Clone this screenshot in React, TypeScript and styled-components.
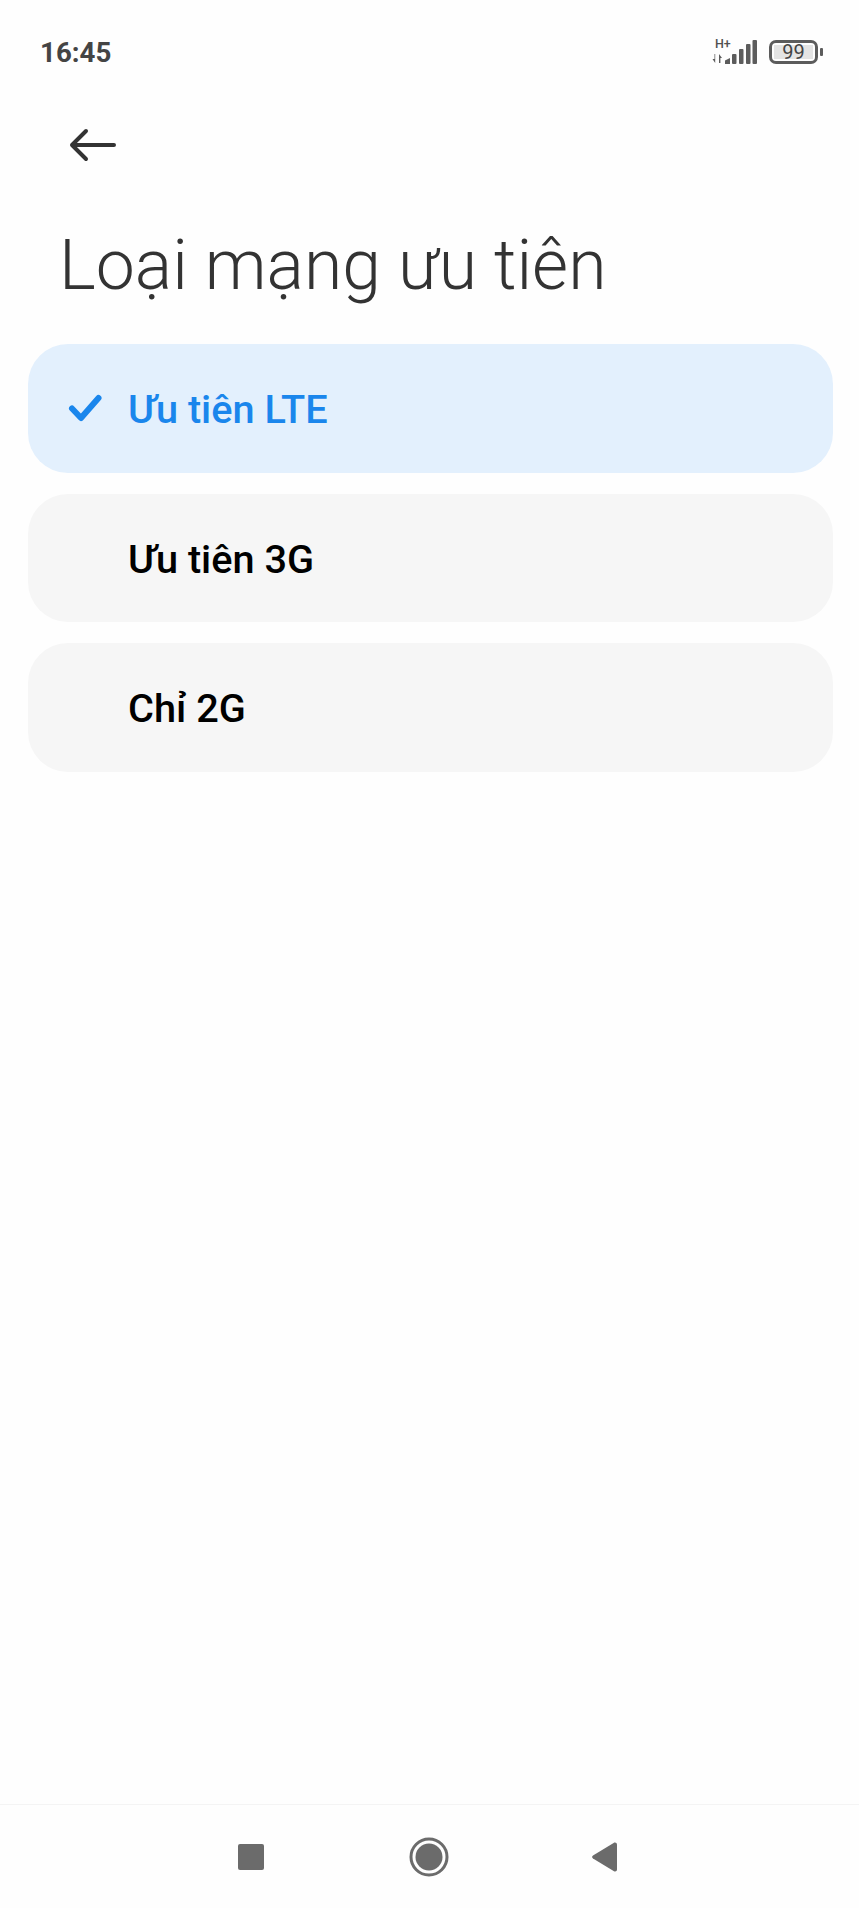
import styled, { createGlobalStyle } from 'styled-components'

const GlobalStyle = createGlobalStyle`
    html, body {
        margin: 0;
        padding: 0;
        background: #ffffff;
        font-family: Roboto, "Noto Sans", sans-serif;
    }
`
const PageStyled = styled.div`
    display: flex;
    flex-direction: column;
    width: 859px;
    height: 1908px;
    overflow: hidden;
    background-color: #fefefe;
`
const StatusBarStyled = styled.header`
    display: flex;
    align-items: center;
    justify-content: space-between;
    height: 104px;
    padding: 0 36px 0 40px;
    box-sizing: border-box;
`
const TimeStyled = styled.span`
    font-size: 27.7px;
    font-weight: 700;
    color: #444444;
`
const StatusIconsStyled = styled.div`
    display: flex;
    align-items: center;
    gap: 12px;
`
const NetworkStyled = styled.div`
    position: relative;
    width: 45px;
    height: 24px;
`
const NetworkTypeStyled = styled.span`
    position: absolute;
    left: 3px;
    top: -2px;
    font-size: 12.5px;
    line-height: 12px;
    font-weight: 500;
    color: #505050;
`
const BatteryStyled = styled.div`
    display: flex;
    align-items: center;
    gap: 2px;
`
const BatteryBodyStyled = styled.div`
    display: flex;
    align-items: center;
    justify-content: center;
    width: 49px;
    height: 24px;
    padding: 2px;
    box-sizing: border-box;
    border: 3px solid #5c5c5c;
    border-radius: 7px;
`
const BatteryLevelStyled = styled.span`
    display: block;
    width: 100%;
    background-color: #e4e4e4;
    font-size: 20px;
    line-height: 14px;
    text-align: center;
    color: #444444;
`
const BatteryNubStyled = styled.span`
    width: 3px;
    height: 8px;
    border-radius: 1px;
    background-color: #5c5c5c;
`
const BackRowStyled = styled.div`
    display: flex;
    padding: 24px 0 0 69px;
`
const TitleStyled = styled.h1`
    margin: 61px 0 37px 59px;
    font-size: 69.7px;
    line-height: 84px;
    font-weight: 300;
    color: #333333;
`
const ListStyled = styled.ul`
    display: flex;
    flex-direction: column;
    gap: 21px;
    margin: 0 26px 0 28px;
    padding: 0;
    list-style: none;
`
const OptionStyled = styled.li<{ $selected?: boolean }>`
    display: flex;
    align-items: center;
    height: 128.5px;
    padding: 3px 0 0 100px;
    box-sizing: border-box;
    position: relative;
    border-radius: 40px;
    font-size: 39.7px;
    font-weight: 500;
    color: ${({ $selected }) => ($selected ? '#1a86ec' : '#000000')};
    background-color: ${({ $selected }) => ($selected ? '#e3f0fd' : '#f6f6f6')};
`
const CheckStyled = styled.svg`
    position: absolute;
    left: 40px;
    top: 50px;
`
const NavBarStyled = styled.nav`
    display: flex;
    align-items: center;
    justify-content: space-between;
    height: 104px;
    margin-top: auto;
    padding: 0 242px 0 238px;
    box-sizing: border-box;
    border-top: 1px solid #f4f4f4;
`
const HomeIconStyled = styled.svg`
    margin-left: 2px;
`

const options = [
    { label: 'Ưu tiên LTE', selected: true },
    { label: 'Ưu tiên 3G', selected: false },
    { label: 'Chỉ 2G', selected: false },
]

function SignalIcon() {
    return (
        <svg width="45" height="24" viewBox="0 0 45 24" fill="#5c5c5c">
            <path d="M2.5 14v5H0.5l2.7 4V14zM7 23v-9l3 4H8.4v5z" />
            <path d="M13 20.5l5-2.5v6h-5z" />
            <rect x="20" y="14" width="4.5" height="10" rx="1" />
            <rect x="27" y="9" width="4.5" height="15" rx="1" />
            <rect x="34" y="4" width="4.5" height="20" rx="1" />
            <rect x="40.5" y="0" width="4.5" height="24" rx="1" />
        </svg>
    )
}

function App() {
    return (
        <PageStyled>
            <GlobalStyle />
            <StatusBarStyled>
                <TimeStyled>16:45</TimeStyled>
                <StatusIconsStyled>
                    <NetworkStyled>
                        <NetworkTypeStyled>H+</NetworkTypeStyled>
                        <SignalIcon />
                    </NetworkStyled>
                    <BatteryStyled>
                        <BatteryBodyStyled>
                            <BatteryLevelStyled>99</BatteryLevelStyled>
                        </BatteryBodyStyled>
                        <BatteryNubStyled />
                    </BatteryStyled>
                </StatusIconsStyled>
            </StatusBarStyled>
            <BackRowStyled>
                <svg width="49" height="34" viewBox="0 0 49 34" fill="none" stroke="#333333" strokeWidth="4" strokeLinecap="round" strokeLinejoin="round">
                    <path d="M45 17H3M17 3L3 17l14 14" />
                </svg>
            </BackRowStyled>
            <TitleStyled>Loại mạng ưu tiên</TitleStyled>
            <ListStyled>
                {options.map(option => (
                    <OptionStyled key={option.label} $selected={option.selected}>
                        {option.selected && (
                            <CheckStyled width="34" height="28" viewBox="0 0 34 28" fill="none" stroke="#1a86ec" strokeWidth="6" strokeLinecap="round" strokeLinejoin="round">
                                <path d="M4 14.5L13 24 30.5 4" />
                            </CheckStyled>
                        )}
                        {option.label}
                    </OptionStyled>
                ))}
            </ListStyled>
            <NavBarStyled>
                <svg width="26" height="26" viewBox="0 0 26 26" fill="#6b6b6b">
                    <rect width="26" height="26" rx="2" />
                </svg>
                <HomeIconStyled width="40" height="40" viewBox="0 0 40 40" fill="#6b6b6b">
                    <circle cx="20" cy="20" r="18" fill="none" stroke="#6b6b6b" strokeWidth="3" />
                    <circle cx="20" cy="20" r="13.5" />
                </HomeIconStyled>
                <svg width="25" height="30" viewBox="0 0 25 30" fill="#6b6b6b">
                    <path d="M23 0.6c1 0 2 .8 2 2v25c0 1.6-1.6 2.4-3 1.6L1 16.6c-1.2-.8-1.2-2.4 0-3.2L21.6 1c.5-.3 1-.4 1.4-.4z" />
                </svg>
            </NavBarStyled>
        </PageStyled>
    )
}

export default App
